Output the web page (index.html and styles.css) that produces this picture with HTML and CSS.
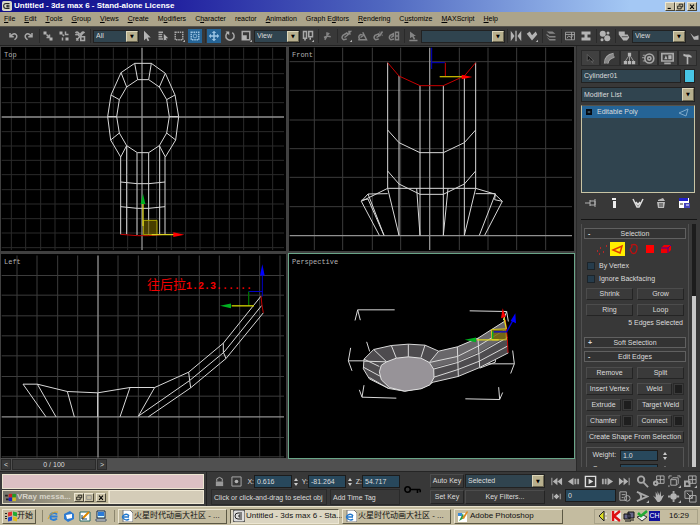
FILE: index.html
```html
<!DOCTYPE html>
<html lang="en">
<head>
  <meta charset="UTF-8">
  <meta name="viewport" content="width=device-width, initial-scale=1.0">
  <title>Untitled - 3ds max 6 - Stand-alone License</title>
  <link rel="stylesheet" href="styles.css">
</head>
<body>

<header class="titlebar">
  <svg class="app-icon" viewBox="0 0 12 12"><rect width="12" height="12" rx="2" fill="#d8d8c8"/><path d="M9 3H5Q2 3 2 6t3 3h4M9 5H6v2h3" fill="none" stroke="#222" stroke-width="1.3"/></svg>
  <h1>Untitled - 3ds max 6 - Stand-alone License</h1>
  <div class="window-buttons">
    <button class="win-btn" aria-label="Minimize"><svg viewBox="0 0 10 9"><path d="M2 7h4" stroke="#000" stroke-width="1.5"/></svg></button>
    <button class="win-btn" aria-label="Restore"><svg viewBox="0 0 10 9"><path d="M4 3V1.500h4.500V5H7M2 4h4.500v3.500H2z" fill="none" stroke="#000"/></svg></button>
    <button class="win-btn close" aria-label="Close"><svg viewBox="0 0 10 9"><path d="M2.500 2l5 5.500m0-5.500l-5 5.500" stroke="#000" stroke-width="1.400"/></svg></button>
  </div>
</header>

<nav class="menubar">
  <button><u>F</u>ile</button>
  <button><u>E</u>dit</button>
  <button><u>T</u>ools</button>
  <button><u>G</u>roup</button>
  <button><u>V</u>iews</button>
  <button><u>C</u>reate</button>
  <button>M<u>o</u>difiers</button>
  <button>C<u>h</u>aracter</button>
  <button>reactor</button>
  <button><u>A</u>nimation</button>
  <button>Graph E<u>d</u>itors</button>
  <button><u>R</u>endering</button>
  <button>C<u>u</u>stomize</button>
  <button><u>M</u>AXScript</button>
  <button><u>H</u>elp</button>
</nav>

<div class="toolbar">
  <button class="tool" aria-label="Undo"><svg viewBox="0 0 16 16"><path d="M4 4v5h5M4 9Q9 3 12 6t-2 7" class="ln2"/></svg></button>
  <button class="tool" aria-label="Redo"><svg viewBox="0 0 16 16"><path d="M12 4v5H7m5 0Q7 3 4 6t2 7" class="ln2"/></svg></button>
  <span class="sep"></span>
  <button class="tool" aria-label="Select and Link"><svg viewBox="0 0 16 16"><path d="M2 2h4v4H2zM10 10h4v4h-4z" class="fl"/><path d="M6 6l4 4M10 6v4H6" class="ln2"/></svg></button>
  <button class="tool" aria-label="Unlink Selection"><svg viewBox="0 0 16 16"><path d="M2 2h4v4H2zM10 10h4v4h-4z" class="fl"/><path d="M6 6l2 2M10 2v4h4M6 10v4" class="ln2"/></svg></button>
  <button class="tool" aria-label="Bind to Space Warp"><svg viewBox="0 0 16 16"><path d="M2 4q2-3 4 0t4 0 4 0M2 7q2-3 4 0t4 0M9 9h5v5H9zM3 14L13 3M3 11l3 3" class="ln2"/></svg></button>
  <span class="sep"></span>
  <span class="drop filter"><select aria-label="Selection Filter"><option>All</option></select></span>
  <button class="tool" aria-label="Select Object"><svg viewBox="0 0 16 16"><path d="M4 1l9 9H9l2 4-2 1-2-4-3 3z" class="fl"/></svg></button>
  <button class="tool" aria-label="Select by Name"><svg viewBox="0 0 16 16"><path d="M2 3h6M2 6h5M2 9h5M2 12h6" class="ln2"/><path d="M9 5l6 6h-3l1 3-2-1-2 1z" class="fl"/></svg></button>
  <button class="tool" aria-label="Rectangular Selection Region"><svg viewBox="0 0 16 16"><path d="M3 3h10v10H3z" class="ln2" stroke-dasharray="2 1"/><path d="M16 13v3h-3z" class="fl"/></svg></button>
  <button class="tool on" aria-label="Window/Crossing"><svg viewBox="0 0 16 16"><path d="M3 3h10v10H3z" class="ln2" stroke-dasharray="2 1"/><circle cx="8" cy="8" r="2.500" class="ln"/></svg></button>
  <span class="sep"></span>
  <button class="tool on" aria-label="Select and Move"><svg viewBox="0 0 16 16"><path d="M8 3v10M3 8h10" class="ln2"/><path d="M8 1l3 3H5zM8 15l3-3H5zM1 8l3-3v6zM15 8l-3-3v6z" class="fl"/></svg></button>
  <button class="tool" aria-label="Select and Rotate"><svg viewBox="0 0 16 16"><path d="M5 3.500A5.500 5.500 0 1 0 11 3.500" class="ln2"/><path d="M2 2h5v5z" class="fl"/></svg></button>
  <button class="tool" aria-label="Select and Scale"><svg viewBox="0 0 16 16"><path d="M3 2h10v11H3z" class="ln2"/><path d="M3 7h6v6H3zM16 13v3h-3z" class="fl"/></svg></button>
  <span class="drop coords"><select aria-label="Reference Coordinate System"><option>View</option></select></span>
  <button class="tool" aria-label="Use Pivot Point Center"><svg viewBox="0 0 16 16"><path d="M2 2h4v9H2zM9 2h5v7H9z" class="ln2"/><path d="M3 12h2v2H3zM10 10h2v3h-2zM16 13v3h-3z" class="fl"/></svg></button>
  <span class="sep"></span>
  <button class="tool" aria-label="Select and Manipulate"><svg viewBox="0 0 16 16"><path d="M8 3v5M4 10l4-2 5 1M8 8l-3 5M11 4l-2 2" class="ln2 dim"/></svg></button>
  <span class="sep"></span>
  <button class="tool" aria-label="Snap Toggle"><svg viewBox="0 0 16 16"><path d="M9 12l-4 1q-4-2-1-6l5-3 2 2-5 4M11 2h3l-2 2 2 2" class="ln2 dim"/><path d="M16 13v3h-3z" class="fl"/></svg></button>
  <button class="tool" aria-label="Angle Snap Toggle"><svg viewBox="0 0 16 16"><path d="M3 13h11L9 3M5 12q-3-3 1-6l4 1-4 3" class="ln2 dim"/></svg></button>
  <button class="tool" aria-label="Percent Snap Toggle"><svg viewBox="0 0 16 16"><path d="M9 12l-4 1q-4-2-1-6l5-2v3l-3 2M14 2l-4 6M10 3h1M13 7h1" class="ln2 dim"/></svg></button>
  <button class="tool" aria-label="Spinner Snap Toggle"><svg viewBox="0 0 16 16"><path d="M8 12l-4 1q-4-2-1-6l4-2v3l-3 2M10 3h4v10h-4zM10 8h4" class="ln2 dim"/></svg></button>
  <span class="sep"></span>
  <button class="tool" aria-label="Edit Named Selection Sets"><svg viewBox="0 0 16 16"><path d="M4 2l8 6H9l2 4-2 1-2-4-3 2z" class="fl dim"/><path d="M3 14h11" class="ln2 dim"/></svg></button>
  <span class="drop sets"><select aria-label="Named Selection Sets"><option></option></select></span>
  <span class="sep"></span>
  <button class="tool" aria-label="Mirror"><svg viewBox="0 0 16 16"><path d="M1 1l5 7-5 7zM15 1l-5 7 5 7z" class="fl"/><path d="M8 1v14" class="ln2"/></svg></button>
  <button class="tool" aria-label="Align"><svg viewBox="0 0 16 16"><path d="M1 5l4-3 3 5 5-5 2 4-7 8zM16 13v3h-3z" class="fl"/></svg></button>
  <span class="sep"></span>
  <button class="tool" aria-label="Layer Manager"><svg viewBox="0 0 16 16"><path d="M2 2h8l4 3H6zM2 5l4 3h8v2H6L2 7zM2 9l4 3h8v2H6z" class="fl dim"/></svg></button>
  <span class="sep"></span>
  <button class="tool" aria-label="Curve Editor"><svg viewBox="0 0 16 16"><path d="M2 3h12v10H2zM2 6h12M4 11q2-5 4-2t4-2M10 3v10" class="ln"/></svg></button>
  <button class="tool" aria-label="Schematic View"><svg viewBox="0 0 16 16"><path d="M2 2h12v4H2zM2 10h12v4H2zM6 6h4v4H6z" class="fl"/></svg></button>
  <span class="sep"></span>
  <button class="tool" aria-label="Material Editor"><svg viewBox="0 0 16 16"><circle cx="5" cy="5" r="4" class="fl"/><circle cx="12" cy="4" r="2" class="fl"/><circle cx="4" cy="13" r="2" class="fl"/><circle cx="11" cy="11" r="4" class="fl"/></svg></button>
  <span class="sep"></span>
  <button class="tool" aria-label="Render Scene"><svg viewBox="0 0 16 16"><path d="M1 2h8v4h4l2 4-3 4H7L4 10 1 6z" class="fl"/><path d="M5 9h8" stroke="#333"/></svg></button>
  <span class="drop render"><select aria-label="Render Type"><option>View</option></select></span>
  <button class="tool" aria-label="Quick Render"><svg viewBox="0 0 16 16"><path d="M3 4l5 5 6-2v6H8z" class="fl"/></svg></button>
</div>

<main class="workspace">
  <div class="stage">
    <div class="viewports">

      <section class="viewport">
        <h2>Top</h2>
        <svg viewBox="3 3 855 612" preserveAspectRatio="xMidYMid slice">
          <path class="grid" d="M34 5V612M77 5V612M122 5V612M165 5V612M208 5V612M253 5V612M296 5V612M340 5V612M383 5V612M470 5V612M514 5V612M557 5V612M600 5V612M643 5V612M688 5V612M731 5V612M775 5V612M818 5V612M5 40H852M5 83H852M5 125H852M5 170H852M5 257H852M5 300H852M5 343H852M5 386H852M5 431H852M5 474H852M5 518H852M5 561H852M5 605H852"/>
          <path class="axis" d="M426 5V612M5 213H852"/>
          <path class="wire" d="M404 52H454L496 82L525 147L536 212L527 282L496 333L478 299L446 320H412L380 299L362 333L332 282L323 212L333 147L363 80ZM413 101H446L478 123L500 161L508 212L500 261L478 299M380 299L358 261L350 212L358 161L380 123L413 101M404 52L413 101M454 52L446 101M496 82L478 123M525 147L500 161M536 212H508M527 282L500 261M363 80L380 123M333 147L358 161M323 212H350M332 282L358 261M362 333V565M380 299V565M411 320V567M446 320V567M479 299V565M495 333V565M362 408L412 413H446L495 408M362 482L412 487H446L495 482"/>
          <path d="M362 565L412 569H446L495 565" class="edge"/>
          <path d="M430 523H471V566H430Z" fill="#665800" fill-opacity=".7" stroke="#b0a800" stroke-width="3"/>
          <path d="M429 540V474M455 566H522" stroke="#d8d020" stroke-width="4"/>
          <path d="M429 443l7 31h-14z" fill="#00b020"/>
          <path d="M553 566l-33-7v14z" fill="#f00"/>
        </svg>
      </section>

      <section class="viewport">
        <h2>Front</h2>
        <svg viewBox="3 3 855 612" preserveAspectRatio="xMidYMid slice">
          <path class="grid bright" d="M79 5V612M164 5V612M253 5V612M338 5V612M514 5V612M600 5V612M686 5V612M773 5V612M5 47H852M5 133H852M5 222H852M5 308H852M5 394H852M5 482H852"/>
          <path class="axis" d="M425 5V612M5 569H852"/>
          <path class="wire" d="M299 50V427L333 568V90M396 119V568M466 119V568M529 90V568L563 427V50M299 252L333 290L396 320H466L529 290L563 252M299 375L333 414L396 445H466L529 414L563 375M299 427H563L620 444L643 466L590 568M299 427L220 466L274 568M220 466L240 444L299 443M240 444L288 568M220 463L240 459M386 427L396 568M480 427L466 568M563 443H622L620 461L643 466M622 444L574 568M240 459L288 568"/>
          <path class="edge" d="M299 50L333 90L396 119H466L529 90L563 50"/>
          <path d="M431 5V69M431 50H471" stroke="#0000c8" stroke-width="3"/>
          <path d="M472 50V92" stroke="#d00000" stroke-width="3"/>
          <path d="M455 92H526" stroke="#c0b000" stroke-width="4"/>
          <path d="M553 93l-32-7v14z" fill="#f00"/>
        </svg>
      </section>

      <section class="viewport">
        <h2>Left</h2>
        <svg viewBox="3 6 855 615" preserveAspectRatio="xMidYMid slice">
          <path class="grid bright" d="M51 12V618M111 12V618M173 12V618M233 12V618M354 12V618M415 12V618M476 12V618M537 12V618M598 12V618M658 12V618M719 12V618M779 12V618M840 12V618M5 72H852M5 131H852M5 193H852M5 253H852M5 313H852M5 375H852M5 434H852M5 558H852M5 616H852"/>
          <path class="axis" d="M294 12V618M5 496H852"/>
          <path class="wire" d="M138 496L69 398H112L202 420L293 424L390 408H464L566 362L670 275L783 134M112 398L168 496M202 420L223 496M293 424V496M390 408L360 496M464 408L415 494L569 387L672 302L785 162M445 496L572 409L678 321L790 184M566 362L569 387L572 409M670 275V302L678 321"/>
          <path class="edge" d="M783 134L786 162L790 184"/>
          <path d="M787 135V70M746 120H787" stroke="#0000c8" stroke-width="3"/>
          <path d="M787 38l7 34h-14z" fill="#00f"/>
          <path d="M746 120V162" stroke="#007000" stroke-width="4"/>
          <path d="M762 163H695" stroke="#d0d000" stroke-width="4"/>
          <path d="M660 163l33-7v14z" fill="#00b020"/>
          <text class="note" x="441" y="112">往后拉<tspan class="note-count">1.2.3......</tspan></text>
        </svg>
      </section>

      <section class="viewport active">
        <h2>Perspective</h2>
        <svg viewBox="3 6 855 615" preserveAspectRatio="xMidYMid slice">
          <path class="wire" d="M201 207L209 175H320M209 175L217 206M545 178L656 180L661 210M646 206L656 180M188 289L181 328H295M181 328L192 358M236 271L245 300M228 401L222 437L325 440M222 437L214 415M532 442L635 444L632 407M635 444L644 423M674 297L679 337H555M679 337L668 366"/>
          <path d="M228 323L257 294L310 282L361 278L411 281L452 299L508 286L570 260L652 208L661 304L575 348L510 375L436 392L404 409L350 419L302 411L244 382L226 352Z" fill="#4d4b4e"/>
          <path d="M452 299L508 286L570 260L652 208L655 255L575 301L509 330L436 349L424 333Z" fill="#69676a"/>
          <path class="wire" d="M228 323L257 294L310 282L361 278L411 281L452 299L508 286L570 260L652 208M228 323L226 352L244 382L302 411L350 419L404 409L436 392L510 375L575 348L661 304M257 294L296 331M310 282L325 320M361 278V316M411 281L399 318M452 299L424 333L508 315L572 283L655 232M228 323L274 345M226 347L276 374M244 378L302 411M436 353L509 333L575 305L658 258M438 377L510 354L574 329L660 283M508 286L511 375M570 260L575 348M228 329L296 331M575 350L622 332V325"/>
          <path d="M296 331L325 320L361 316L399 320L424 333L437 353L438 378L426 400L399 412L350 419L304 408L280 385L274 361L280 341Z" fill="#979398" stroke="#e0e0e0" stroke-width="3"/>
          <path d="M610 234L655 232V265H612Z" fill="#766500" fill-opacity=".8" stroke="#d8c820" stroke-width="3"/>
          <path class="edge" d="M652 205L658 260L660 304"/>
          <path d="M567 265H632M655 232L648 198" stroke="#e0d820" stroke-width="4"/>
          <path d="M530 265l34-7v14z" fill="#00b020"/>
          <path d="M614 262V240" stroke="#00b020" stroke-width="4"/>
          <path d="M617 241H656L674 208" fill="none" stroke="#0000d8" stroke-width="4"/>
          <path d="M682 185l2 30-16-7z" fill="#00f"/>
          <path d="M644 170l9 26-14 4z" fill="#f00"/>
        </svg>
      </section>

    </div>
    <div class="timeslider">
      <button class="step" aria-label="Previous Frame">&lt;</button>
      <button class="thumb">0 / 100</button>
      <button class="step" aria-label="Next Frame">&gt;</button>
    </div>
  </div>

  <aside class="panel">
    <div class="tabs">
      <button class="tab" aria-label="Create"><svg viewBox="0 0 16 16"><path d="M4 3l8 8H9l2 3M4 3v8l3-2" fill="#111" stroke="#666"/></svg></button>
      <button class="tab current" aria-label="Modify"><svg viewBox="0 0 16 16"><path d="M2 14Q2 4 13 2M6 14q0-6 8-8" class="ln2"/><path d="M2 14Q2 4 13 2l1 4q-8 2-8 8z" fill="#888"/></svg></button>
      <button class="tab" aria-label="Hierarchy"><svg viewBox="0 0 16 16"><path d="M6 1h4v4H6zM1 11h4v4H1zM6 11h4v4H6zM11 11h4v4h-4z" class="fl"/><path d="M8 5v6M7 5l-4 6M9 5l4 6" class="ln"/></svg></button>
      <button class="tab" aria-label="Motion"><svg viewBox="0 0 16 16"><circle cx="9" cy="8" r="5.500" class="ln2"/><circle cx="9" cy="8" r="2" class="ln2"/><path d="M1 4h3M0 7h3M1 11h3" class="ln"/></svg></button>
      <button class="tab" aria-label="Display"><svg viewBox="0 0 16 16"><path d="M1 2h14v9H1zM4 14h8" class="ln2"/><path d="M4 9l2-5 2 5zM9 4h4v5H9z" class="fl"/></svg></button>
      <button class="tab" aria-label="Utilities"><svg viewBox="0 0 16 16"><path d="M3 2l3 1h4l3 2v2l-3-1H9v9H7V6L3 5z" class="fl"/></svg></button>
    </div>

    <div class="object-name">
      <input type="text" value="Cylinder01" aria-label="Object name">
      <button class="swatch" aria-label="Object color"></button>
    </div>

    <span class="drop modifiers"><select aria-label="Modifier List"><option>Modifier List</option></select></span>

    <ul class="stack">
      <li>
        <svg class="expand" viewBox="0 0 7 7"><path d="M0 0h7v7H0z" fill="#050a10"/><path d="M2 3.500h3" stroke="#7ab"/></svg>
        <span>Editable Poly</span>
        <svg class="sub" viewBox="0 0 12 9"><path d="M1 5l9-4-2 7z" fill="none" stroke="#7ea9c9"/></svg>
      </li>
    </ul>

    <div class="stack-tools">
      <button aria-label="Pin Stack"><svg viewBox="0 0 14 14"><path d="M1 7h5M6 4v6M6 5h5v4H6M11 3v8" class="ln"/></svg></button>
      <button aria-label="Show End Result"><svg viewBox="0 0 14 14"><path d="M5 2h4v2H5zM6 5h3v7H6z" fill="#eee"/></svg></button>
      <button aria-label="Make Unique"><svg viewBox="0 0 14 14"><path d="M2 3l4 8h2l4-8M5 6l2 3 2-3" fill="none" stroke="#ddd" stroke-width="1.500"/></svg></button>
      <button aria-label="Remove Modifier"><svg viewBox="0 0 14 14"><path d="M3 6h8l-1 6H4zM4 4l5-2 2 3H4z" fill="#bbb"/><path d="M6 7v4M8 7v4" stroke="#333"/></svg></button>
      <button aria-label="Configure Modifier Sets"><svg viewBox="0 0 14 14"><path d="M2 2h10v10H2z" fill="#fff"/><path d="M2 2h9v3H2z" fill="#22c"/><path d="M7 7h6v5H7z" fill="#44b"/><path d="M9 9h3M3 7h3M3 9h3" stroke="#fff"/><path d="M3 8h3" stroke="#333"/></svg></button>
    </div>

    <div class="rollouts">
      <div class="rollout-list">
        <button class="rollout-head"><i>-</i>Selection</button>
        <div class="rollout-body selection">
          <div class="sublevels">
            <button aria-label="Vertex"><svg viewBox="0 0 14 12"><path d="M2 8h1M5 5h1M8 9h1M11 3h1M4 11h1" stroke="#d22" stroke-width="1.300"/></svg></button>
            <button class="picked" aria-label="Edge"><svg viewBox="0 0 14 12"><path d="M2 7l9-4-2 7z" fill="none" stroke="#e03a00" stroke-width="1.500"/></svg></button>
            <button aria-label="Border"><svg viewBox="0 0 14 12"><path d="M4 2q7-2 6 4t-5 4M4 2q2 2 0 3t1 5" fill="none" stroke="#b11" stroke-width="1.300"/></svg></button>
            <button aria-label="Polygon"><svg viewBox="0 0 14 12"><path d="M3 2h8v8H3z" fill="#f00"/></svg></button>
            <button aria-label="Element"><svg viewBox="0 0 14 12"><path d="M2 5l3-3h7v5l-3 3H2z" fill="#e00"/><path d="M2 5h7v5M9 5l3-3" stroke="#409" fill="none"/></svg></button>
          </div>
          <label class="check"><input type="checkbox">By Vertex</label>
          <label class="check"><input type="checkbox">Ignore Backfacing</label>
          <div class="pair">
            <button class="btn">Shrink</button>
            <button class="btn">Grow</button>
            <button class="btn">Ring</button>
            <button class="btn">Loop</button>
          </div>
          <p class="count">5 Edges Selected</p>
        </div>

        <button class="rollout-head"><i>+</i>Soft Selection</button>
        <button class="rollout-head"><i>-</i>Edit Edges</button>
        <div class="rollout-body edges">
          <div class="pair">
            <button class="btn">Remove</button>
            <button class="btn">Split</button>
            <button class="btn">Insert Vertex</button>
            <div class="with-settings"><button class="btn">Weld</button><button class="settings" aria-label="Weld Settings"></button></div>
            <div class="with-settings"><button class="btn">Extrude</button><button class="settings" aria-label="Extrude Settings"></button></div>
            <button class="btn">Target Weld</button>
            <div class="with-settings"><button class="btn">Chamfer</button><button class="settings" aria-label="Chamfer Settings"></button></div>
            <div class="with-settings"><button class="btn">Connect</button><button class="settings" aria-label="Connect Settings"></button></div>
            <button class="btn full">Create Shape From Selection</button>
          </div>
          <div class="weights">
            <label for="weight">Weight:</label><input id="weight" type="text" value="1.0"><span class="spinner"></span>
            <label for="crease">Crease:</label><input id="crease" type="text" value="0.0"><span class="spinner"></span>
          </div>
        </div>
      </div>
      <div class="scrollbar"></div>
    </div>
  </aside>
</main>

<footer class="statusbar">
  <div class="listener">
    <input class="macro" type="text" aria-label="Macro recorder">
    <div class="listener-row">
      <div class="vray">
        <svg class="logo" viewBox="0 0 12 10"><path d="M0 2h3v2H0zM1 6h3v2H1z" fill="#222"/><path d="M4 1h4v4H4z" fill="#c22"/><path d="M8 1h4v4H8z" fill="#292"/><path d="M4 5h4v4H4z" fill="#22b"/><path d="M8 5h4v4H8z" fill="#cb2"/></svg>
        <span>VRay messa...</span>
        <button class="win-btn" aria-label="Restore"><svg viewBox="0 0 10 9"><path d="M4 3V1.500h4.500V5H7M2 4h4.500v3.500H2z" fill="none" stroke="#000"/></svg></button>
        <button class="win-btn" aria-label="Maximize"><svg viewBox="0 0 10 9"><path d="M2 2h6v5H2z" fill="none" stroke="#888"/></svg></button>
        <button class="win-btn close" aria-label="Close"><svg viewBox="0 0 10 9"><path d="M2.500 2l5 5.500m0-5.500l-5 5.500" stroke="#000" stroke-width="1.400"/></svg></button>
      </div>
      <input class="script" type="text" aria-label="Script listener">
    </div>
  </div>

  <div class="coordinates">
    <div class="coord-row">
      <button class="small" aria-label="Selection Lock"><svg viewBox="0 0 12 12"><path d="M3 6V3q3-3 6 0v3" class="ln"/><path d="M2 6h8v5H2z" fill="#999"/></svg></button>
      <button class="small" aria-label="Absolute Mode"><svg viewBox="0 0 12 12"><path d="M1 1h10v10H1z" class="ln"/><circle cx="6" cy="6" r="2" class="fl"/></svg></button>
      <label for="cx">X:</label><input id="cx" type="text" value="0.616"><span class="spinner"></span>
      <label for="cy">Y:</label><input id="cy" type="text" value="-81.264"><span class="spinner"></span>
      <label for="cz">Z:</label><input id="cz" type="text" value="54.717">
    </div>
    <div class="prompt-row">
      <span class="prompt">Click or click-and-drag to select obj</span>
      <button class="tag">Add Time Tag</button>
    </div>
  </div>

  <button class="setkeys" aria-label="Set Keys"><svg viewBox="0 0 20 12"><circle cx="4" cy="6" r="3" fill="none" stroke="#000" stroke-width="1.800"/><path d="M7 6h11M15 6v4M18 6v3" stroke="#000" stroke-width="1.800"/></svg></button>

  <div class="keying">
    <button class="btn">Auto Key</button>
    <span class="drop"><select aria-label="Key set"><option>Selected</option></select></span>
    <button class="btn">Set Key</button>
    <button class="btn">Key Filters...</button>
  </div>

  <div class="transport">
    <button aria-label="Go to Start"><svg viewBox="0 0 14 14"><path d="M2 3v8" class="ln"/><path d="M8 3v8L3 7zM13 3v8L8 7z" class="fl"/></svg></button>
    <button aria-label="Previous"><svg viewBox="0 0 14 14"><path d="M7 3v8L1 7z" class="fl"/><path d="M9 4v6M12 4v6" class="ln2"/></svg></button>
    <button aria-label="Play"><svg viewBox="0 0 14 14"><path d="M1.500 1.500h11v11h-11z" fill="none" stroke="#ddd" stroke-width="1.500"/><path d="M5 4v6l5-3z" fill="#ddd"/></svg></button>
    <button aria-label="Next"><svg viewBox="0 0 14 14"><path d="M7 3v8l6-4z" class="fl"/><path d="M2 4v6M5 4v6" class="ln2"/></svg></button>
    <button aria-label="Go to End"><svg viewBox="0 0 14 14"><path d="M12 3v8" class="ln"/><path d="M1 3v8l5-4zM6 3v8l5-4z" class="fl"/></svg></button>
    <button aria-label="Key Mode"><svg viewBox="0 0 14 14"><path d="M3 4v6M11 4v6" class="ln"/><path d="M7 4v6L4 7zM7 4v6l3-3z" class="fl"/></svg></button>
    <input class="frame" type="text" value="0" aria-label="Current frame">
    <button aria-label="Time Configuration"><svg viewBox="0 0 14 14"><path d="M2 2h7v9H2zM4 5h4M4 8h2" class="ln"/><circle cx="10" cy="9" r="3" class="ln"/></svg></button>
  </div>

  <div class="navigation">
    <button aria-label="Zoom"><svg viewBox="0 0 14 14"><circle cx="5.500" cy="5" r="3.500" class="ln2"/><path d="M8 8l5 5" class="ln2"/></svg></button>
    <button aria-label="Zoom All"><svg viewBox="0 0 14 14"><path d="M5 1h8v8H5zM9 1v8M5 5h8" class="ln"/><circle cx="4" cy="9" r="2" class="ln2"/></svg></button>
    <button aria-label="Zoom Extents"><svg viewBox="0 0 14 14"><path d="M3 5h6v6H3zM3 5l2-2h6v6l-2 2M1 4V1h3M10 1h3v2M1 11v2" class="ln"/><path d="M14 11v3h-3z" class="fl"/></svg></button>
    <button aria-label="Zoom Extents All"><svg viewBox="0 0 14 14"><path d="M5 1h8v8H5zM9 1v8M5 5h8" class="ln"/><path d="M1 7h5v5H1z" class="ln2"/><path d="M14 11v3h-3z" class="fl"/></svg></button>
    <button aria-label="Field-of-View"><svg viewBox="0 0 14 14"><path d="M1 2l11 5L1 12M4 4q3 3 0 7" class="ln2"/><path d="M14 11v3h-3z" class="fl"/></svg></button>
    <button aria-label="Pan"><svg viewBox="0 0 14 14"><path d="M1 6l3 2V2l2 4V1l2 5 1-5 1 6 3-2-3 6-2 2H6z" class="fl"/></svg></button>
    <button aria-label="Arc Rotate"><svg viewBox="0 0 14 14"><circle cx="6" cy="7" r="3.500" class="fl"/><path d="M6 1v3M6 10v3M0 7h3M9 7h3" class="ln2"/><path d="M14 11v3h-3z" class="fl"/></svg></button>
    <button aria-label="Min/Max Toggle"><svg viewBox="0 0 14 14"><path d="M1 1h8v8H1zM6 6h7v7H6zM3 3l6 6" class="ln"/></svg></button>
  </div>
</footer>

<div class="taskbar">
  <button class="start">
    <svg viewBox="0 0 12 11"><path d="M0 3h2M0 6h2M0 8h2" stroke="#222"/><path d="M3 2l4-1v4L3 6z" fill="#d33"/><path d="M8 1l4 1v4L8 5z" fill="#2a3"/><path d="M3 7l4-1v4l-4 1z" fill="#24c"/><path d="M8 6l4 1v4l-4-1z" fill="#db2"/></svg>
    开始
  </button>
  <div class="quick">
    <button aria-label="Internet Explorer"><svg viewBox="0 0 12 12"><path d="M10.500 6.500H3M10 4.500Q8 2 5 3.500T4 9q3 2 6-.5" fill="none" stroke="#2e7fd6" stroke-width="2"/><path d="M1 9q3-8 10-7" fill="none" stroke="#e0a520"/></svg></button>
    <button aria-label="Outlook Express"><svg viewBox="0 0 12 12"><path d="M1 4l6-3 4 3v5l-6 3-4-3z" fill="#2d7ad0"/><path d="M3 5l6-1v4l-5 1z" fill="#fff"/></svg></button>
    <button aria-label="Show Desktop"><svg viewBox="0 0 12 12"><path d="M1 2h10v9H1z" fill="#fff" stroke="#266"/><path d="M3 9l7-7" stroke="#d80" stroke-width="2"/><path d="M3 5v4h5" fill="none" stroke="#147"/></svg></button>
    <button aria-label="My Computer"><svg viewBox="0 0 12 12"><path d="M2 1h8v7H2z" fill="#dff" stroke="#124"/><path d="M3 2h6v4H3z" fill="#2a7ad8"/><path d="M1 9h10v2H1z" fill="#eee" stroke="#456"/></svg></button>
  </div>
  <div class="tasks">
    <button class="task"><svg viewBox="0 0 12 12"><path d="M2 0h7l3 3v9H2z" fill="#fff" stroke="#777"/><path d="M8 7H2.500M8 6Q6 3 3 5t0 4 5 0" fill="none" stroke="#27c" stroke-width="1.500"/></svg><span>火星时代动画大社区 - ...</span></button>
    <button class="task pressed"><svg viewBox="0 0 12 12"><rect width="12" height="12" rx="2" fill="#ddd" stroke="#333"/><path d="M9 3H5Q2 3 2 6t3 3h4M9 5H6v2h3" fill="none" stroke="#222"/></svg><span>Untitled - 3ds max 6 - Sta...</span></button>
    <button class="task"><svg viewBox="0 0 12 12"><path d="M2 0h7l3 3v9H2z" fill="#fff" stroke="#777"/><path d="M8 7H2.500M8 6Q6 3 3 5t0 4 5 0" fill="none" stroke="#27c" stroke-width="1.500"/></svg><span>火星时代动画大社区 - ...</span></button>
    <button class="task"><svg viewBox="0 0 12 12"><path d="M1 3h9v9H1z" fill="#fff"/><path d="M2 11L6 3l1 5z" fill="#2a9a44"/><path d="M5 8l5-7 1 1-4 7z" fill="#e08a20"/><path d="M1 3h4v3H1z" fill="#3a8ad8"/></svg><span>Adobe Photoshop</span></button>
  </div>
  <div class="tray">
    <svg viewBox="0 0 12 12"><path d="M7 1v10L2 6z" fill="#dd2" stroke="#222"/><path d="M9 3v2M9 7v2" stroke="#fff"/></svg>
    <svg viewBox="0 0 12 12"><path d="M1 1h10v10H1z" fill="#eee"/><path d="M3 1v10M10 1L4 6l6 5" fill="none" stroke="#d11" stroke-width="2.500"/></svg>
    <svg viewBox="0 0 12 12"><path d="M1 4h6v5H1zM5 2h6v6H5z" fill="#668" stroke="#111"/><path d="M2 11h6M7 10h4" stroke="#111"/></svg>
    <svg viewBox="0 0 12 12"><path d="M1 7l6-2 4 2-5 4z" fill="#eee" stroke="#333"/><path d="M2 3l3 3 6-5" fill="none" stroke="#2a3" stroke-width="2.500"/></svg>
    <span class="ime">CH</span>
    <time>16:29</time>
  </div>
</div>

</body>
</html>
```
FILE: styles.css
```css
* {
  box-sizing: border-box;
}

body {
  margin: 0;
  height: 100vh;
  display: flex;
  flex-direction: column;
  overflow: hidden;
  background: #383838;
  color: #dcdcdc;
  font-family: "Liberation Sans", "Noto Sans CJK SC", sans-serif;
  font-size: 7px;
  line-height: 10px;
}

button, input, select {
  font: inherit;
  color: inherit;
  margin: 0;
  padding: 0;
  border: none;
  border-radius: 0;
  background: none;
  min-width: 0;
}

button {
  display: flex;
  align-items: center;
  justify-content: center;
  white-space: nowrap;
}

h1, h2, p, ul {
  margin: 0;
  padding: 0;
}

svg {
  display: block;
}

/* icon strokes */
.ln {
  fill: none;
  stroke: #b0b0b0;
}

.ln2 {
  fill: none;
  stroke: #a8a8a8;
  stroke-width: 2;
}

.fl {
  fill: #b4b4b4;
}

.ln.dim, .ln2.dim {
  stroke: #858585;
}

.fl.dim {
  fill: #858585;
}

/* title bar */
.titlebar {
  display: flex;
  align-items: center;
  height: 12px;
  padding: 0 3px 0 2px;
  background: linear-gradient(to right, #10108a, #2222a0 25%, #5068c0 55%, #a4c8f4 90%);
}

.app-icon {
  width: 10px;
  height: 10px;
  margin-right: 2px;
}

.titlebar h1 {
  flex: 1;
  color: #fff;
  font-size: 8px;
  font-weight: bold;
}

.window-buttons {
  display: flex;
}

.win-btn {
  width: 10px;
  height: 9px;
  background: #c8c0a4;
  border: 1px solid;
  border-color: #eee8d4 #4a4638 #4a4638 #eee8d4;
}

.win-btn.close {
  margin-left: 2px;
}

.win-btn svg {
  width: 8px;
  height: 7px;
}

/* menu */
.menubar {
  display: flex;
  gap: 9px;
  height: 14px;
  padding: 0 4px;
  background: #aca48a;
  color: #000;
}

/* main toolbar */
.toolbar {
  display: flex;
  align-items: center;
  height: 20px;
  padding-left: 5px;
  overflow: hidden;
  border-top: 1px solid #55534c;
  border-bottom: 1px solid #222;
}

.tool {
  flex: none;
  width: 16px;
  height: 16px;
}

.tool svg {
  width: 12px;
  height: 12px;
}

.tool.on {
  background: #256496;
  background-clip: content-box;
  padding: 1px;
}

.tool.on .ln, .tool.on .ln2 {
  stroke: #9cc4e4;
}

.tool.on .fl {
  fill: #9cc4e4;
}

.sep {
  flex: none;
  width: 3px;
  height: 14px;
  border-right: 1px solid #2a2a2a;
}

/* drop-downs */
.drop {
  display: flex;
  flex: none;
  height: 13px;
  background: #30444f;
  border: 1px solid #222;
}

.drop select {
  flex: 1;
  appearance: none;
  padding-left: 2px;
}

.drop::after {
  content: "▼";
  width: 10px;
  background: #b8b08e;
  border: 1px solid;
  border-color: #dcd6ba #6a6550 #6a6550 #dcd6ba;
  color: #000;
  font-family: "DejaVu Sans", sans-serif;
  font-size: 5px;
  line-height: 9px;
  text-align: center;
}

.filter {
  width: 46px;
  margin-left: 2px;
}

.coords {
  width: 46px;
}

.sets {
  width: 84px;
}

.render {
  width: 54px;
}

/* viewports */
.workspace {
  flex: 1;
  display: flex;
  min-height: 0;
}

.stage {
  flex: 1;
  display: flex;
  flex-direction: column;
  min-width: 0;
}

.viewports {
  flex: 1;
  display: grid;
  grid-template-columns: 1fr 1fr;
  grid-template-rows: 1fr 1fr;
  gap: 3px;
  min-height: 0;
  padding: 1px 2px 0 1px;
  background: #404040;
}

.viewport {
  position: relative;
  min-width: 0;
  min-height: 0;
  background: #000;
}

.viewport.active {
  outline: 1px solid #6aa588;
}

.viewport h2 {
  position: absolute;
  left: 3px;
  top: 3px;
  color: #b4b4b4;
  font-family: "Liberation Mono", monospace;
  font-size: 7px;
  font-weight: normal;
}

.viewport svg {
  width: 100%;
  height: 100%;
}

.grid {
  fill: none;
  stroke: #2b2b2b;
  stroke-width: 3;
}

.grid.bright {
  stroke: #3c3c3c;
}

.axis {
  fill: none;
  stroke: #909090;
  stroke-width: 4;
}

.wire {
  fill: none;
  stroke: #d8d8d8;
  stroke-width: 3;
}

.edge {
  fill: none;
  stroke: #c80000;
  stroke-width: 3;
}

.note {
  fill: #f00000;
  font-family: "Noto Sans CJK SC", sans-serif;
  font-size: 39px;
}

.note-count {
  font-family: "Liberation Mono", monospace;
  font-size: 30px;
  font-weight: bold;
}

.timeslider {
  display: flex;
  gap: 1px;
  height: 13px;
  padding: 1px 0 0 1px;
  background: #505050;
}

.timeslider button {
  height: 11px;
  background: #3a3a3a;
  border: 1px solid #2a2a2a;
}

.step {
  width: 10px;
}

.thumb {
  width: 84px;
}

/* command panel */
.panel {
  flex: none;
  display: flex;
  flex-direction: column;
  width: 124px;
  padding: 4px 3px 0 4px;
  border-left: 1px solid #2a2a2a;
}

.tabs {
  display: flex;
  height: 16px;
}

.tab {
  flex: 1;
  border: 1px solid #2b2b2b;
  background: #404040;
}

.tab svg {
  width: 15px;
  height: 13px;
}

.tab.current {
  background: #383838;
}

.object-name {
  display: flex;
  gap: 3px;
  height: 14px;
  margin-top: 3px;
  padding-right: 2px;
}

.object-name input {
  flex: 1;
  padding-left: 2px;
  background: #30444f;
  border: 1px solid #222;
}

.swatch {
  width: 11px;
  background: #48c4e4;
  border: 1px solid #222;
}

.modifiers {
  height: 15px;
  margin: 4px 2px 0 0;
}

.modifiers::after {
  line-height: 11px;
}

.stack {
  height: 88px;
  margin: 3px 2px 0 0;
  background: #30444f;
  border: 1px solid #c8c4a4;
  border-top-color: #55534c;
  list-style: none;
}

.stack li {
  display: flex;
  align-items: center;
  height: 12px;
  padding: 0 4px;
  background: #256496;
}

.stack span {
  flex: 1;
  margin-left: 5px;
}

.expand {
  width: 6px;
  height: 6px;
}

.sub {
  width: 12px;
  height: 9px;
}

.stack-tools {
  display: flex;
  justify-content: space-between;
  height: 27px;
  padding: 3px 6px 9px 3px;
  border-bottom: 1px solid #151515;
}

.stack-tools svg {
  width: 14px;
  height: 14px;
}

.rollouts {
  flex: 1;
  display: flex;
  gap: 3px;
  min-height: 0;
  margin-top: 4px;
  padding-bottom: 4px;
}

.rollout-list {
  flex: 1;
  min-width: 0;
  overflow: hidden;
  padding: 4px 2px 0;
  border-left: 1px solid #505050;
  border-right: 1px solid #505050;
}

.rollout-head {
  position: relative;
  width: 100%;
  height: 11px;
  background: #333;
  border: 1px solid #606060;
}

.rollout-head i {
  position: absolute;
  left: 3px;
  font-style: normal;
  font-weight: bold;
}

.rollout-head + .rollout-head {
  margin-top: 3px;
}

.rollout-body {
  padding: 3px 2px;
}

.selection {
  height: 98px;
}

.sublevels {
  display: flex;
  gap: 1px;
  padding-left: 8px;
}

.sublevels button {
  width: 15px;
  height: 14px;
}

.sublevels svg {
  width: 14px;
  height: 12px;
}

.sublevels .picked {
  background: #ffee00;
}

.check {
  display: flex;
  align-items: center;
  gap: 4px;
  height: 13px;
}

.check input {
  appearance: none;
  width: 8px;
  height: 8px;
  margin-left: 1px;
  background: #263c4c;
  border: 1px solid #1c242a;
}

.sublevels + .check {
  margin-top: 3px;
}

.pair {
  display: grid;
  grid-template-columns: 1fr 1fr;
  gap: 4px;
  margin-top: 3px;
}

.btn {
  height: 12px;
  background: #3a3a3a;
  border: 1px solid;
  border-color: #4c4c4c #242424 #242424 #4c4c4c;
}

.full {
  grid-column: 1 / -1;
}

.with-settings {
  display: flex;
  gap: 1px;
}

.with-settings .btn {
  flex: 1;
}

.settings {
  width: 11px;
  height: 12px;
  background: #1e1e1e;
  border: 2px solid #3a3a3a;
  outline: 1px solid #2a2a2a;
  outline-offset: -1px;
}

.count {
  margin-top: 2px;
  padding-right: 1px;
  text-align: right;
}

.edges {
  padding-top: 2px;
}

.weights {
  display: grid;
  grid-template-columns: auto 38px 8px;
  gap: 3px;
  justify-content: end;
  margin-top: 4px;
  padding: 2px 14px 2px 2px;
  border: 1px solid #555;
}

.weights input, .coord-row input, .frame {
  height: 11px;
  padding-left: 2px;
  background: #28485c;
  border: 1px solid #1c1c1c;
}

.spinner {
  display: flex;
  flex-direction: column;
  justify-content: center;
  align-items: center;
  gap: 2px;
  width: 7px;
}

.spinner::before, .spinner::after {
  content: "";
  border: 2px solid transparent;
  border-top-width: 0;
  border-bottom: 3px solid #ccc;
}

.spinner::after {
  border-top: 3px solid #ccc;
  border-bottom-width: 0;
}

.scrollbar {
  flex: none;
  width: 4px;
  margin-right: 1px;
  background: linear-gradient(#1c1c1c 72px, #c8c8c8 72px);
}

/* status bar */
.statusbar {
  display: flex;
  height: 35px;
  border-top: 1px solid #252525;
}

.listener {
  flex: none;
  display: flex;
  flex-direction: column;
  gap: 1px;
  width: 206px;
  padding: 2px;
  background: #3a3a3a;
}

.macro {
  height: 15px;
  background: #dcc0c4;
  border: 1px solid #ece4d0;
}

.listener-row {
  flex: 1;
  display: flex;
}

.vray {
  display: flex;
  align-items: center;
  width: 107px;
  padding: 0 2px;
  background: linear-gradient(to right, #77756c, #c0b898);
  border: 1px solid #e4dcc4;
  color: #d8d4c8;
  font-size: 8px;
  font-weight: bold;
  white-space: nowrap;
}

.vray span {
  flex: 1;
  margin-left: 1px;
}

.logo {
  width: 11px;
  height: 9px;
}

.script {
  flex: 1;
  background: #d4ccb8;
  border: 1px solid #efe8d4;
}

.coordinates {
  flex: 1;
  min-width: 0;
  padding: 2px 0 0 4px;
  border-left: 1px solid #222;
}

.coord-row {
  display: flex;
  align-items: center;
  height: 15px;
}

.coord-row label {
  width: 9px;
  text-align: right;
}

.coord-row input {
  flex: 1;
  width: 36px;
  height: 13px;
}

.small {
  width: 17px;
}

.small svg {
  width: 11px;
  height: 11px;
}

.prompt-row {
  display: flex;
  gap: 3px;
  height: 16px;
  line-height: 15px;
}

.prompt-row > * {
  border: 1px solid #2a2a2a;
}

.prompt {
  flex: 1;
  white-space: nowrap;
  padding-left: 2px;
}

.tag {
  flex: none;
  width: 70px;
  justify-content: flex-start;
  padding-left: 2px;
}

.setkeys {
  width: 30px;
  justify-content: flex-start;
  padding-left: 4px;
}

.setkeys svg {
  width: 18px;
  height: 11px;
}

.keying {
  display: grid;
  grid-template-columns: 34px 80px;
  grid-template-rows: 14px 14px;
  gap: 2px 1px;
  padding: 2px 0;
}

.keying .btn, .keying .drop {
  height: 14px;
}

.keying .drop::after {
  line-height: 10px;
}

.transport {
  display: grid;
  grid-template-columns: repeat(5, 17px);
  grid-template-rows: 15px 15px;
  padding: 2px 0 0 3px;
}

.transport svg, .navigation svg {
  width: 13px;
  height: 13px;
}

.frame {
  grid-column: span 3;
  height: 13px;
}

.navigation {
  display: grid;
  grid-template-columns: repeat(4, 16px);
  grid-template-rows: 15px 15px;
  padding: 2px 2px 0 1px;
}

/* taskbar */
.taskbar {
  display: flex;
  align-items: center;
  height: 19px;
  padding: 0 2px;
  background: #c4bca0;
  border-top: 1px solid #e8e2cc;
  color: #111;
  font-size: 8px;
}

.taskbar svg {
  flex: none;
  width: 12px;
  height: 12px;
}

.start, .task {
  height: 15px;
  border: 1px solid;
  border-color: #ece6d2 #5c5844 #5c5844 #ece6d2;
}

.start {
  width: 34px;
}

.quick {
  display: flex;
  gap: 4px;
  margin: 0 3px 0 6px;
  padding: 0 7px 0 4px;
  border-left: 1px solid #8c866e;
  border-right: 1px solid #8c866e;
}

.tasks {
  flex: 1;
  display: flex;
  gap: 3px;
  min-width: 0;
}

.task {
  flex: 1;
  justify-content: flex-start;
  gap: 1px;
  max-width: 109px;
  padding: 0 2px;
}

.task.pressed {
  background: #dcd6c2;
  border-color: #5c5844 #ece6d2 #ece6d2 #5c5844;
}

.tray {
  display: flex;
  align-items: center;
  gap: 1px;
  height: 15px;
  padding: 0 8px 0 2px;
  border: 1px solid #a8a288;
}

.ime {
  width: 11px;
  background: #10109a;
  color: #fff;
  font-size: 7px;
  text-align: center;
}

.tray time {
  margin-left: 8px;
}
```
